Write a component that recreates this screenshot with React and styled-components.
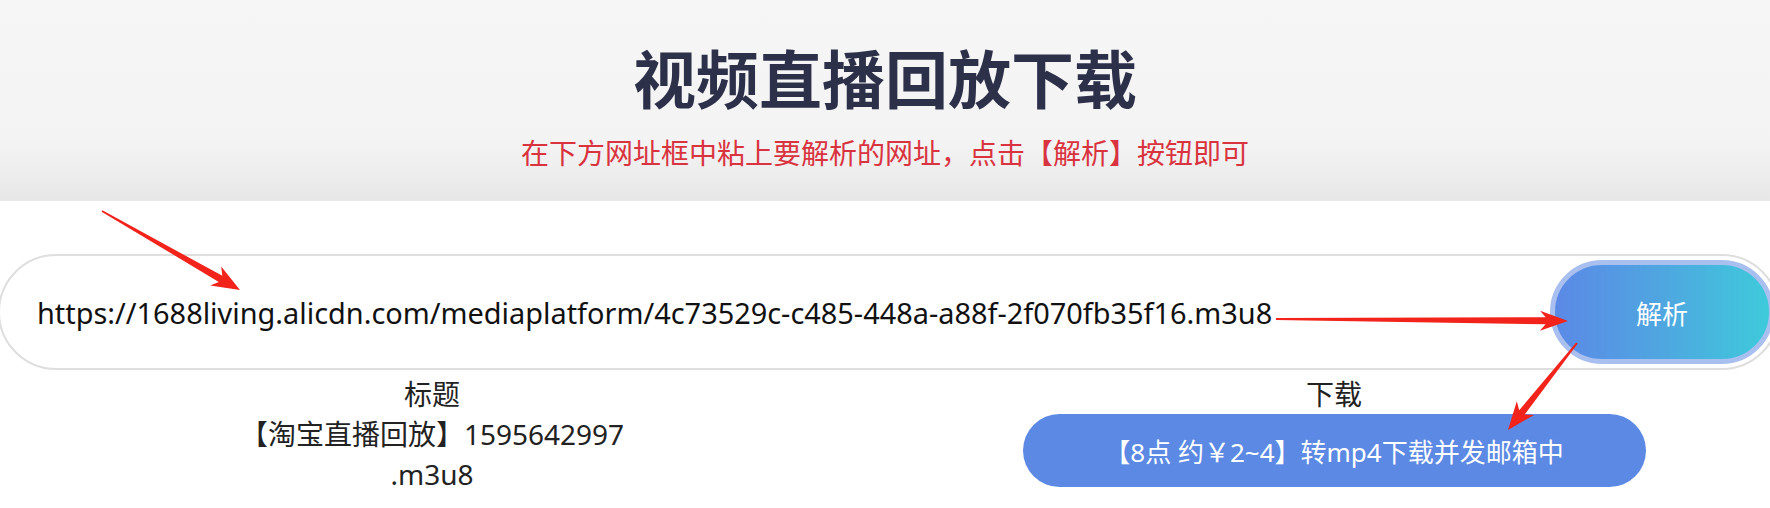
import React from "react";
import styled, { createGlobalStyle } from "styled-components";

const GlobalStyle = createGlobalStyle`
  html, body {
    margin: 0;
    padding: 0;
    background: #ffffff;
    overflow: hidden;
  }
  body {
    font-family: "Noto Sans", "Noto Sans CJK SC", sans-serif;
    color: #222;
  }
  * { box-sizing: border-box; }
`;

const Page = styled.div`
  position: relative;
  width: 1770px;
  min-height: 508px;
`;

const Hero = styled.header`
  height: 201px;
  padding-top: 34px;
  display: flex;
  flex-direction: column;
  align-items: center;
  gap: 14px;
  background: linear-gradient(to bottom, #f6f6f6 0%, #f3f3f3 72%, #e7e7e7 100%);
`;

const Title = styled.h1`
  margin: 0;
  font-family: "Noto Sans CJK SC", sans-serif;
  font-weight: 700;
  font-size: 63px;
  line-height: 84px;
  color: #2c3049;
  letter-spacing: 0;
`;

const Subtitle = styled.p`
  margin: 0;
  font-family: "Noto Sans CJK SC", sans-serif;
  font-size: 28px;
  line-height: 40px;
  color: #d9333f;
`;

const SearchBar = styled.div`
  margin: 53px -10px 0 -2px;
  height: 116px;
  border: 2px solid #dedede;
  border-radius: 58px;
  display: flex;
  align-items: center;
  padding: 4px 4px 4px 37px;
  background: #fff;
`;

const UrlText = styled.div`
  flex: 1;
  font-family: "Noto Sans", "Noto Sans CJK SC", sans-serif;
  font-size: 28.9px;
  color: #111;
  white-space: nowrap;
  overflow: hidden;
`;

const ParseButton = styled.button`
  width: 224px;
  height: 104px;
  border-radius: 52px;
  border: 5px solid #a9bfef;
  background: linear-gradient(to right, #5b89e6 0%, #4fa6e0 50%, #3ecadb 100%);
  color: #fff;
  font-family: "Noto Sans CJK SC", sans-serif;
  font-size: 26px;
  display: flex;
  align-items: center;
  justify-content: center;
  padding: 0;
`;

const ResultTable = styled.div`
  margin-top: 4px;
  display: grid;
  grid-template-columns: 864px 1fr;
  column-gap: 34px;
  font-family: "Noto Sans", "Noto Sans CJK SC", sans-serif;
  font-size: 28px;
  line-height: 40px;
  color: #222;
`;

const HeadCell = styled.div`
  text-align: center;
`;

const Cell = styled.div`
  display: flex;
  justify-content: center;
  text-align: center;
`;

const FileName = styled.div`
  max-width: 420px;
`;

const DownloadButton = styled.button`
  width: 623px;
  height: 73px;
  border: none;
  border-radius: 37px;
  background: #5b89e4;
  color: #fff;
  font-family: "Noto Sans", "Noto Sans CJK SC", sans-serif;
  font-size: 26px;
  display: flex;
  align-items: center;
  justify-content: center;
  padding: 0;
`;

const Annotations = styled.svg`
  position: absolute;
  left: 0;
  top: 0;
  pointer-events: none;
`;

function arrowPoints(x1, y1, x2, y2, tailW, shaftW, headL, headW) {
  const dx = x2 - x1;
  const dy = y2 - y1;
  const len = Math.sqrt(dx * dx + dy * dy);
  const ux = dx / len;
  const uy = dy / len;
  const nx = -uy;
  const ny = ux;
  const bx = x2 - ux * headL;
  const by = y2 - uy * headL;
  const nbx = x2 - ux * headL * 0.8;
  const nby = y2 - uy * headL * 0.8;
  const pts = [
    [x1 + (nx * tailW) / 2, y1 + (ny * tailW) / 2],
    [nbx + (nx * shaftW) / 2, nby + (ny * shaftW) / 2],
    [bx + (nx * headW) / 2, by + (ny * headW) / 2],
    [x2, y2],
    [bx - (nx * headW) / 2, by - (ny * headW) / 2],
    [nbx - (nx * shaftW) / 2, nby - (ny * shaftW) / 2],
    [x1 - (nx * tailW) / 2, y1 - (ny * tailW) / 2],
  ];
  return pts.map((p) => p.map((v) => v.toFixed(1)).join(",")).join(" ");
}

const arrows = [
  [102, 211, 240, 290, 1.5, 7, 28, 22],
  [1276, 319, 1568, 321, 2, 7, 28, 20],
  [1577, 343, 1508, 430, 2, 7, 28, 22],
];

export default function App() {
  return (
    <Page>
      <GlobalStyle />
      <Hero>
        <Title>视频直播回放下载</Title>
        <Subtitle>在下方网址框中粘上要解析的网址，点击【解析】按钮即可</Subtitle>
      </Hero>
      <SearchBar>
        <UrlText>
          https://1688living.alicdn.com/mediaplatform/4c73529c-c485-448a-a88f-2f070fb35f16.m3u8
        </UrlText>
        <ParseButton>解析</ParseButton>
      </SearchBar>
      <ResultTable>
        <HeadCell>标题</HeadCell>
        <HeadCell>下载</HeadCell>
        <Cell>
          <FileName>
            【淘宝直播回放】1595642997<wbr />.m3u8
          </FileName>
        </Cell>
        <Cell>
          <DownloadButton>【8点 约￥2~4】转mp4下载并发邮箱中</DownloadButton>
        </Cell>
      </ResultTable>
      <Annotations width="1770" height="508" viewBox="0 0 1770 508">
        {arrows.map((a, i) => (
          <polygon key={i} points={arrowPoints(...a)} fill="#f2231b" />
        ))}
      </Annotations>
    </Page>
  );
}
